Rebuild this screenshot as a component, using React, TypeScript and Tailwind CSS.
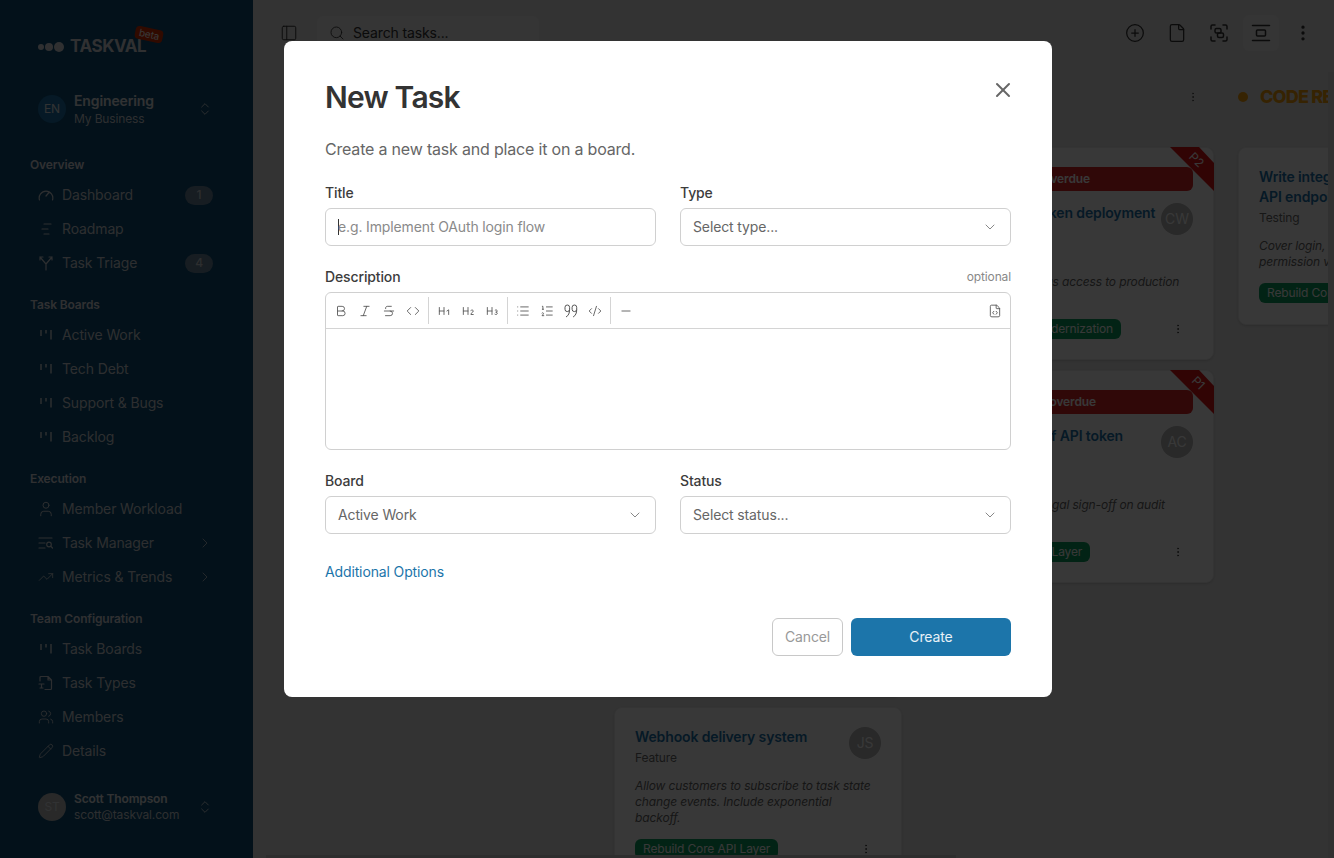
import {
  Bold,
  ChevronDown,
  ChevronRight,
  ChevronsUpDown,
  CirclePlus,
  Code,
  CodeXml,
  EllipsisVertical,
  File,
  FileCode,
  Heading1,
  Heading2,
  Heading3,
  Italic,
  List,
  ListOrdered,
  Minus,
  PanelLeft,
  Pencil,
  Search,
  Strikethrough,
  TrendingUp,
  User,
  Users,
  X,
} from 'lucide-react';
import type { ReactNode } from 'react';

const font = { fontFamily: 'Inter, "Liberation Sans", sans-serif' };

function BoardIcon() {
  return (
    <svg width="16" height="16" viewBox="0 0 16 16" fill="none" stroke="currentColor" strokeWidth="1.5">
      <path d="M3 3v6M8 3v3.5M13 3v9.5" />
    </svg>
  );
}

function GaugeIcon() {
  return (
    <svg width="16" height="16" viewBox="0 0 16 16" fill="none" stroke="currentColor" strokeWidth="1.2" strokeLinecap="round">
      <path d="M1.5 13a6.8 6.8 0 1 1 13 0M8 9l3-3.5" />
    </svg>
  );
}

function RoadmapIcon() {
  return (
    <svg width="16" height="16" viewBox="0 0 16 16" fill="none" stroke="currentColor" strokeWidth="1.2" strokeLinecap="round">
      <path d="M6 3h7M4 8h6M6 13h5" />
    </svg>
  );
}

function TriageIcon() {
  return (
    <svg width="16" height="16" viewBox="0 0 16 16" fill="none" stroke="currentColor" strokeWidth="1.2" strokeLinecap="round">
      <path d="M8 15V9L2 2M8 9l6-7M2 5V2h3M11 2h3v3" />
    </svg>
  );
}

function ManagerIcon() {
  return (
    <svg width="16" height="16" viewBox="0 0 16 16" fill="none" stroke="currentColor" strokeWidth="1.2" strokeLinecap="round">
      <path d="M1 3h13M1 8h6M1 13h6" />
      <circle cx="11" cy="9.5" r="2.3" />
      <path d="m13 11.5 1.5 1.5" />
    </svg>
  );
}

function TypesIcon() {
  return (
    <svg width="16" height="16" viewBox="0 0 16 16" fill="none" stroke="currentColor" strokeWidth="1.2" strokeLinecap="round" strokeLinejoin="round">
      <path d="M2 6V2.500A1 1 0 0 1 3 1.500h7l3.500 3.500v8.500a1 1 0 0 1-1 1H7M10 1.500V5h3.500M1 9h5M3.500 9v4M2 13h3" />
    </svg>
  );
}

function QuoteIcon() {
  return (
    <svg width="14" height="14" viewBox="0 0 14 14" fill="none" stroke="currentColor" strokeWidth="1">
      <path d="M3.300 1a2.300 2.300 0 0 0-2.300 2.300v2a2.300 2.300 0 0 0 4.600 0v-2A2.300 2.300 0 0 0 3.300 1ZM5.600 5.500c0 3.500-1 6-3.600 7.500" />
      <path d="M10.400 1a2.300 2.300 0 0 0-2.300 2.300v2a2.300 2.300 0 0 0 4.600 0v-2A2.300 2.300 0 0 0 10.400 1ZM12.700 5.500c0 3.500-1 6-3.600 7.500" />
    </svg>
  );
}

function ScanLinkIcon() {
  return (
    <svg width="20" height="20" viewBox="0 0 20 20" fill="none" stroke="currentColor" strokeWidth="1.5" strokeLinecap="round" strokeLinejoin="round">
      <path d="M2 6V3.500A1.500 1.500 0 0 1 3.500 2H6M14 2h2.500A1.500 1.500 0 0 1 18 3.500V6M18 14v2.500a1.500 1.500 0 0 1-1.500 1.500H14M6 18H3.500A1.500 1.500 0 0 1 2 16.500V14" />
      <rect x="6" y="5.500" width="6" height="4.500" rx="1.500" />
      <rect x="8.500" y="10" width="6" height="4.500" rx="1.500" />
    </svg>
  );
}

function CenterIcon() {
  return (
    <svg width="20" height="20" viewBox="0 0 20 20" fill="none" stroke="currentColor" strokeWidth="1.5" strokeLinecap="round">
      <path d="M1.500 2.500h17M1.500 17.500h17" />
      <rect x="5.500" y="7" width="9" height="6" rx="1" />
    </svg>
  );
}

function NavItem({ icon, label, badge, more }: { icon: ReactNode; label: string; badge?: string; more?: boolean }) {
  return (
    <div className="flex items-center h-[34px] pl-[38px] pr-[40px] text-sm text-[#cdd3d8]">
      <span className="w-4 flex justify-center mr-2">{icon}</span>
      <span className="flex-1">{label}</span>
      {badge && (
        <span className="w-7 h-[19px] rounded-full bg-[#6a8499] text-xs font-medium flex items-center justify-center">
          {badge}
        </span>
      )}
      {more && <ChevronRight className="w-4 h-4" strokeWidth={1.2} />}
    </div>
  );
}

function NavLabel({ children }: { children: ReactNode }) {
  return <div className="mt-[17px] mb-[5px] pl-[30px] h-4 text-xs leading-4 font-semibold text-[#d8dce0]">{children}</div>;
}

function Ribbon({ label }: { label: string }) {
  return (
    <div className="absolute -top-px -right-px w-11 h-11">
      <svg width="44" height="44" viewBox="0 0 44 44" className="absolute inset-0">
        <polygon points="0,0 29,0 44,16 44,44" fill="#e01414" />
      </svg>
      <span className="absolute top-[5px] right-[10px] text-xs text-white rotate-45">{label}</span>
    </div>
  );
}

type CardProps = {
  title: string;
  type: string;
  desc: string;
  tag: string;
  initials?: string;
  overdue?: string;
  overdueClass?: string;
  priority?: string;
  height?: string;
};

function TaskCard({ title, type, desc, tag, initials, overdue, overdueClass, priority, height }: CardProps) {
  return (
    <div className={`relative bg-white border border-[#ececec] rounded-lg px-5 py-[19px] shrink-0 shadow-sm ${height ?? ''}`}>
      {priority && <Ribbon label={priority} />}
      {overdue && (
        <div className={`h-6 mb-3 rounded-md bg-[#dc2626] text-white text-xs font-semibold flex items-center justify-end ${overdueClass ?? ''}`}>
          {overdue}
        </div>
      )}
      <div className="flex justify-between gap-1">
        <div>
          <div className="text-sm leading-5 font-semibold text-[#1b74ab]">{title}</div>
          <div className="mt-[1px] text-xs leading-5 text-[#6b6b6b]">{type}</div>
        </div>
        {initials && (
          <div className="w-8 h-8 shrink-0 rounded-full bg-[#b9b9b9] text-white text-sm flex items-center justify-center">
            {initials}
          </div>
        )}
      </div>
      <div className="mt-[10px] pr-2 text-xs leading-4 italic text-[#666]">{desc}</div>
      <div className="mt-[13px] flex items-center justify-between">
        <span className="h-5 px-2 rounded-md bg-[#0d9f5f] text-white text-xs flex items-center">{tag}</span>
        <EllipsisVertical className="w-3 h-3 mr-[9px] text-[#444]" />
      </div>
    </div>
  );
}

function Field({ label, placeholder, caret }: { label: string; placeholder: string; caret?: boolean }) {
  return (
    <div className="flex-1">
      <div className="mb-[5px] text-sm leading-5 font-medium text-[#3c3c3c]">{label}</div>
      <div className="h-[38px] flex items-center px-3 rounded-md border border-[#d0d0d0] text-sm text-[#8a8a8a]">
        {caret && <span className="w-px h-4 bg-[#333] -mr-px" />}
        {placeholder}
      </div>
    </div>
  );
}

function SelectField({ label, value }: { label: string; value: string }) {
  return (
    <div className="flex-1">
      <div className="mb-[5px] text-sm leading-5 font-medium text-[#3c3c3c]">{label}</div>
      <div className="h-[38px] flex items-center justify-between px-3 rounded-md border border-[#d0d0d0] text-sm text-[#666]">
        {value}
        <ChevronDown className="w-4 h-4 text-[#888]" strokeWidth={1.5} />
      </div>
    </div>
  );
}

function ToolButton({ children }: { children: ReactNode }) {
  return <span className="w-6 h-6 flex items-center justify-center text-[#555]">{children}</span>;
}

function ToolDivider() {
  return <span className="w-px h-[27px] mx-[3px] bg-[#d4d4d4]" />;
}

const ic = 'w-[14px] h-[14px]';

export default function App() {
  return (
    <div className="relative h-[858px] w-[1334px] overflow-hidden flex bg-[#e8e8e8] tracking-[-0.13px]" style={font}>
      {/* sidebar */}
      <aside className="w-[253px] shrink-0 bg-[#0e4d76] text-[#e0e4e7]">
        <div className="relative h-[94px] flex items-center pl-[38px]">
          <span className="w-[6px] h-[6px] rounded-full bg-[#d8dce0]" />
          <span className="w-2 h-2 ml-px rounded-full bg-[#d8dce0]" />
          <span className="w-[10px] h-[10px] ml-px rounded-full bg-[#d8dce0]" />
          <span className="ml-[6px] text-[17px] font-bold text-[#d8dce0] tracking-tight">TASKVAL</span>
          <span className="absolute left-[135px] top-[28px] px-1 h-[13px] leading-[13px] rounded-sm bg-[#dc2f02] text-[10px] text-white rotate-12">
            beta
          </span>
        </div>
        <div className="h-[30px] mb-[33px] flex items-center pl-[38px] pr-[40px]">
          <div className="w-7 h-7 rounded-full bg-[#1b74ab] text-xs flex items-center justify-center mr-2">EN</div>
          <div className="flex-1">
            <div className="text-sm leading-4 mt-px font-semibold">Engineering</div>
            <div className="text-xs leading-4 mt-[2px] text-[#cdd3d8]">My Business</div>
          </div>
          <ChevronsUpDown className="w-4 h-4" strokeWidth={1.3} />
        </div>
        <NavLabel>Overview</NavLabel>
        <NavItem icon={<GaugeIcon />} label="Dashboard" badge="1" />
        <NavItem icon={<RoadmapIcon />} label="Roadmap" />
        <NavItem icon={<TriageIcon />} label="Task Triage" badge="4" />
        <NavLabel>Task Boards</NavLabel>
        <NavItem icon={<BoardIcon />} label="Active Work" />
        <NavItem icon={<BoardIcon />} label="Tech Debt" />
        <NavItem icon={<BoardIcon />} label="Support &amp; Bugs" />
        <NavItem icon={<BoardIcon />} label="Backlog" />
        <NavLabel>Execution</NavLabel>
        <NavItem icon={<User className="w-[18px] h-[18px] shrink-0" strokeWidth={1.3} />} label="Member Workload" />
        <NavItem icon={<ManagerIcon />} label="Task Manager" more />
        <NavItem icon={<TrendingUp className="w-4 h-4" strokeWidth={1.3} />} label="Metrics &amp; Trends" more />
        <NavLabel>Team Configuration</NavLabel>
        <NavItem icon={<BoardIcon />} label="Task Boards" />
        <NavItem icon={<TypesIcon />} label="Task Types" />
        <NavItem icon={<Users className="w-4 h-4" strokeWidth={1.3} />} label="Members" />
        <NavItem icon={<Pencil className="w-4 h-4" strokeWidth={1.3} />} label="Details" />
        <div className="h-[30px] mt-6 flex items-center pl-[38px] pr-[40px]">
          <div className="w-7 h-7 rounded-full bg-[#b9b9b9] text-xs flex items-center justify-center mr-2">ST</div>
          <div className="flex-1">
            <div className="text-xs leading-4 font-semibold">Scott Thompson</div>
            <div className="text-xs leading-4 text-[#cdd3d8]">scott@taskval.com</div>
          </div>
          <ChevronsUpDown className="w-4 h-4" strokeWidth={1.3} />
        </div>
      </aside>

      {/* main */}
      <main className="flex-1 min-w-0 flex flex-col text-[#333] overflow-hidden">
        <header className="h-[66px] shrink-0 flex items-center pl-[27px] pr-[21px]">
          <PanelLeft className="w-[18px] h-[18px] mr-[19px]" strokeWidth={1.3} />
          <div className="w-[222px] h-[34px] flex items-center gap-2 px-3 rounded-md bg-[#f0f0f0] text-sm">
            <Search className="w-4 h-4" strokeWidth={1.3} />
            Search tasks...
          </div>
          <div className="flex-1" />
          <div className="flex items-center gap-[22px]">
            <CirclePlus className="w-5 h-5" strokeWidth={1.5} />
            <File className="w-5 h-5" strokeWidth={1.5} />
            <ScanLinkIcon />
            <span className="w-9 h-9 -mx-2 rounded-md bg-[#f0f0f0] flex items-center justify-center">
              <CenterIcon />
            </span>
            <EllipsisVertical className="w-5 h-5" strokeWidth={2} />
          </div>
        </header>
        <div className="flex gap-6 pl-[49px] min-h-0 flex-1">
          <div className="w-[288px] shrink-0" />
          <div className="w-[288px] shrink-0 flex flex-col">
            <div className="h-[81px] shrink-0" />
            <div className="flex flex-col gap-[10px]">
              <TaskCard title="Tenant isolation audit" type="Feature" desc="Confirm data boundaries." tag="Rebuild Core API Layer" height="h-[270px]" />
              <TaskCard title="Rate limit dashboard" type="Feature" desc="Expose current quota." tag="Rebuild Core API Layer" height="h-[270px]" />
              <TaskCard
                title="Webhook delivery system"
                type="Feature"
                desc="Allow customers to subscribe to task state change events. Include exponential backoff."
                tag="Rebuild Core API Layer"
                initials="JS"
              />
            </div>
          </div>
          <div className="w-[288px] shrink-0 flex flex-col">
            <div className="h-[81px] shrink-0 flex justify-end pt-[18px] pr-[15px]">
              <EllipsisVertical className="w-3 h-3 mt-[7px] text-[#555]" />
            </div>
            <div className="flex flex-col gap-[10px]">
              <TaskCard
                title="Revoke aged token deployment flow"
                type="Security"
                desc="Review who still has access to production keys."
                tag="Legacy Stack Modernization"
                initials="CW"
                overdue="3 days overdue"
                overdueClass="pr-[103px]"
                priority="P2"
                height="h-[213px]"
              />
              <TaskCard
                title="Force rotation of API token expiration"
                type="Security"
                desc="Needs CISO and legal sign-off on audit scope."
                tag="Rebuild Core API Layer"
                initials="AC"
                overdue="1 day overdue"
                overdueClass="pr-[97px]"
                priority="P1"
                height="h-[213px]"
              />
            </div>
          </div>
          <div className="w-[288px] shrink-0 flex flex-col">
            <div className="h-[81px] shrink-0 flex items-center gap-3 pb-[20px]">
              <span className="w-[10px] h-[10px] rounded-full bg-[#f59e0b]" />
              <span className="text-lg font-extrabold tracking-[-0.8px] text-[#f59e0b]">CODE REVIEW</span>
            </div>
            <TaskCard
              title="Write integration tests for all API endpoints"
              type="Testing"
              desc="Cover login, logout, token refresh and permission validation."
              tag="Rebuild Core API Layer"
              initials="MK"
              height="h-[178px]"
            />
          </div>
        </div>
      </main>

      {/* scrollbars of the board */}
      <div className="absolute right-0 top-[72px] bottom-0 w-[6px] bg-[#e0e0e0]" />
      <div className="absolute left-[266px] bottom-0 w-[690px] h-[3px] bg-[#d0d0d0]" />

      {/* modal */}
      <div className="absolute inset-0 bg-black/[.78] flex justify-center pt-[41px] pl-[2px]">
        <div className="w-[768px] h-[656px] bg-white rounded-lg px-[41px] pt-[38px] relative text-[#333]">
          <X className="absolute top-[37px] right-[37px] w-[24px] h-[24px] text-[#666]" strokeWidth={2} />
          <h2 className="text-3xl leading-9 font-semibold tracking-[-0.8px]">New Task</h2>
          <p className="mt-[22px] text-base leading-6 text-[#666] tracking-[-0.19px]">Create a new task and place it on a board.</p>
          <div className="mt-[22px] flex gap-6">
            <Field label="Title" placeholder="e.g. Implement OAuth login flow" caret />
            <SelectField label="Type" value="Select type..." />
          </div>
          <div className="mt-[21px] mb-[5px] flex items-center justify-between">
            <span className="text-sm leading-5 font-medium text-[#3c3c3c]">Description</span>
            <span className="text-xs text-[#888]">optional</span>
          </div>
          <div className="h-[158px] rounded-md border border-[#d0d0d0]">
            <div className="h-9 flex items-center pl-[3px] pr-[3px] border-b border-[#d4d4d4]">
              <ToolButton><Bold className={ic} strokeWidth={1.5} /></ToolButton>
              <ToolButton><Italic className={ic} strokeWidth={1.5} /></ToolButton>
              <ToolButton><Strikethrough className={ic} strokeWidth={1.5} /></ToolButton>
              <ToolButton><Code className={ic} strokeWidth={1.5} /></ToolButton>
              <ToolDivider />
              <ToolButton><Heading1 className={ic} strokeWidth={1.5} /></ToolButton>
              <ToolButton><Heading2 className={ic} strokeWidth={1.5} /></ToolButton>
              <ToolButton><Heading3 className={ic} strokeWidth={1.5} /></ToolButton>
              <ToolDivider />
              <ToolButton><List className={ic} strokeWidth={1.5} /></ToolButton>
              <ToolButton><ListOrdered className={ic} strokeWidth={1.5} /></ToolButton>
              <ToolButton><QuoteIcon /></ToolButton>
              <ToolButton><CodeXml className={ic} strokeWidth={1.5} /></ToolButton>
              <ToolDivider />
              <ToolButton><Minus className={ic} strokeWidth={1.5} /></ToolButton>
              <span className="flex-1" />
              <ToolButton><FileCode className={ic} strokeWidth={1.5} /></ToolButton>
            </div>
          </div>
          <div className="mt-[21px] flex gap-6">
            <SelectField label="Board" value="Active Work" />
            <SelectField label="Status" value="Select status..." />
          </div>
          <div className="mt-7 text-sm leading-5 text-[#1c75aa]">Additional Options</div>
          <div className="mt-9 flex justify-end gap-2">
            <span className="w-[71px] h-[38px] rounded-md border border-[#c8c8c8] text-sm text-[#999] flex items-center justify-center">
              Cancel
            </span>
            <span className="w-[160px] h-[38px] rounded-md bg-[#1c75aa] text-sm text-white/90 flex items-center justify-center">
              Create
            </span>
          </div>
        </div>
      </div>
    </div>
  );
}
